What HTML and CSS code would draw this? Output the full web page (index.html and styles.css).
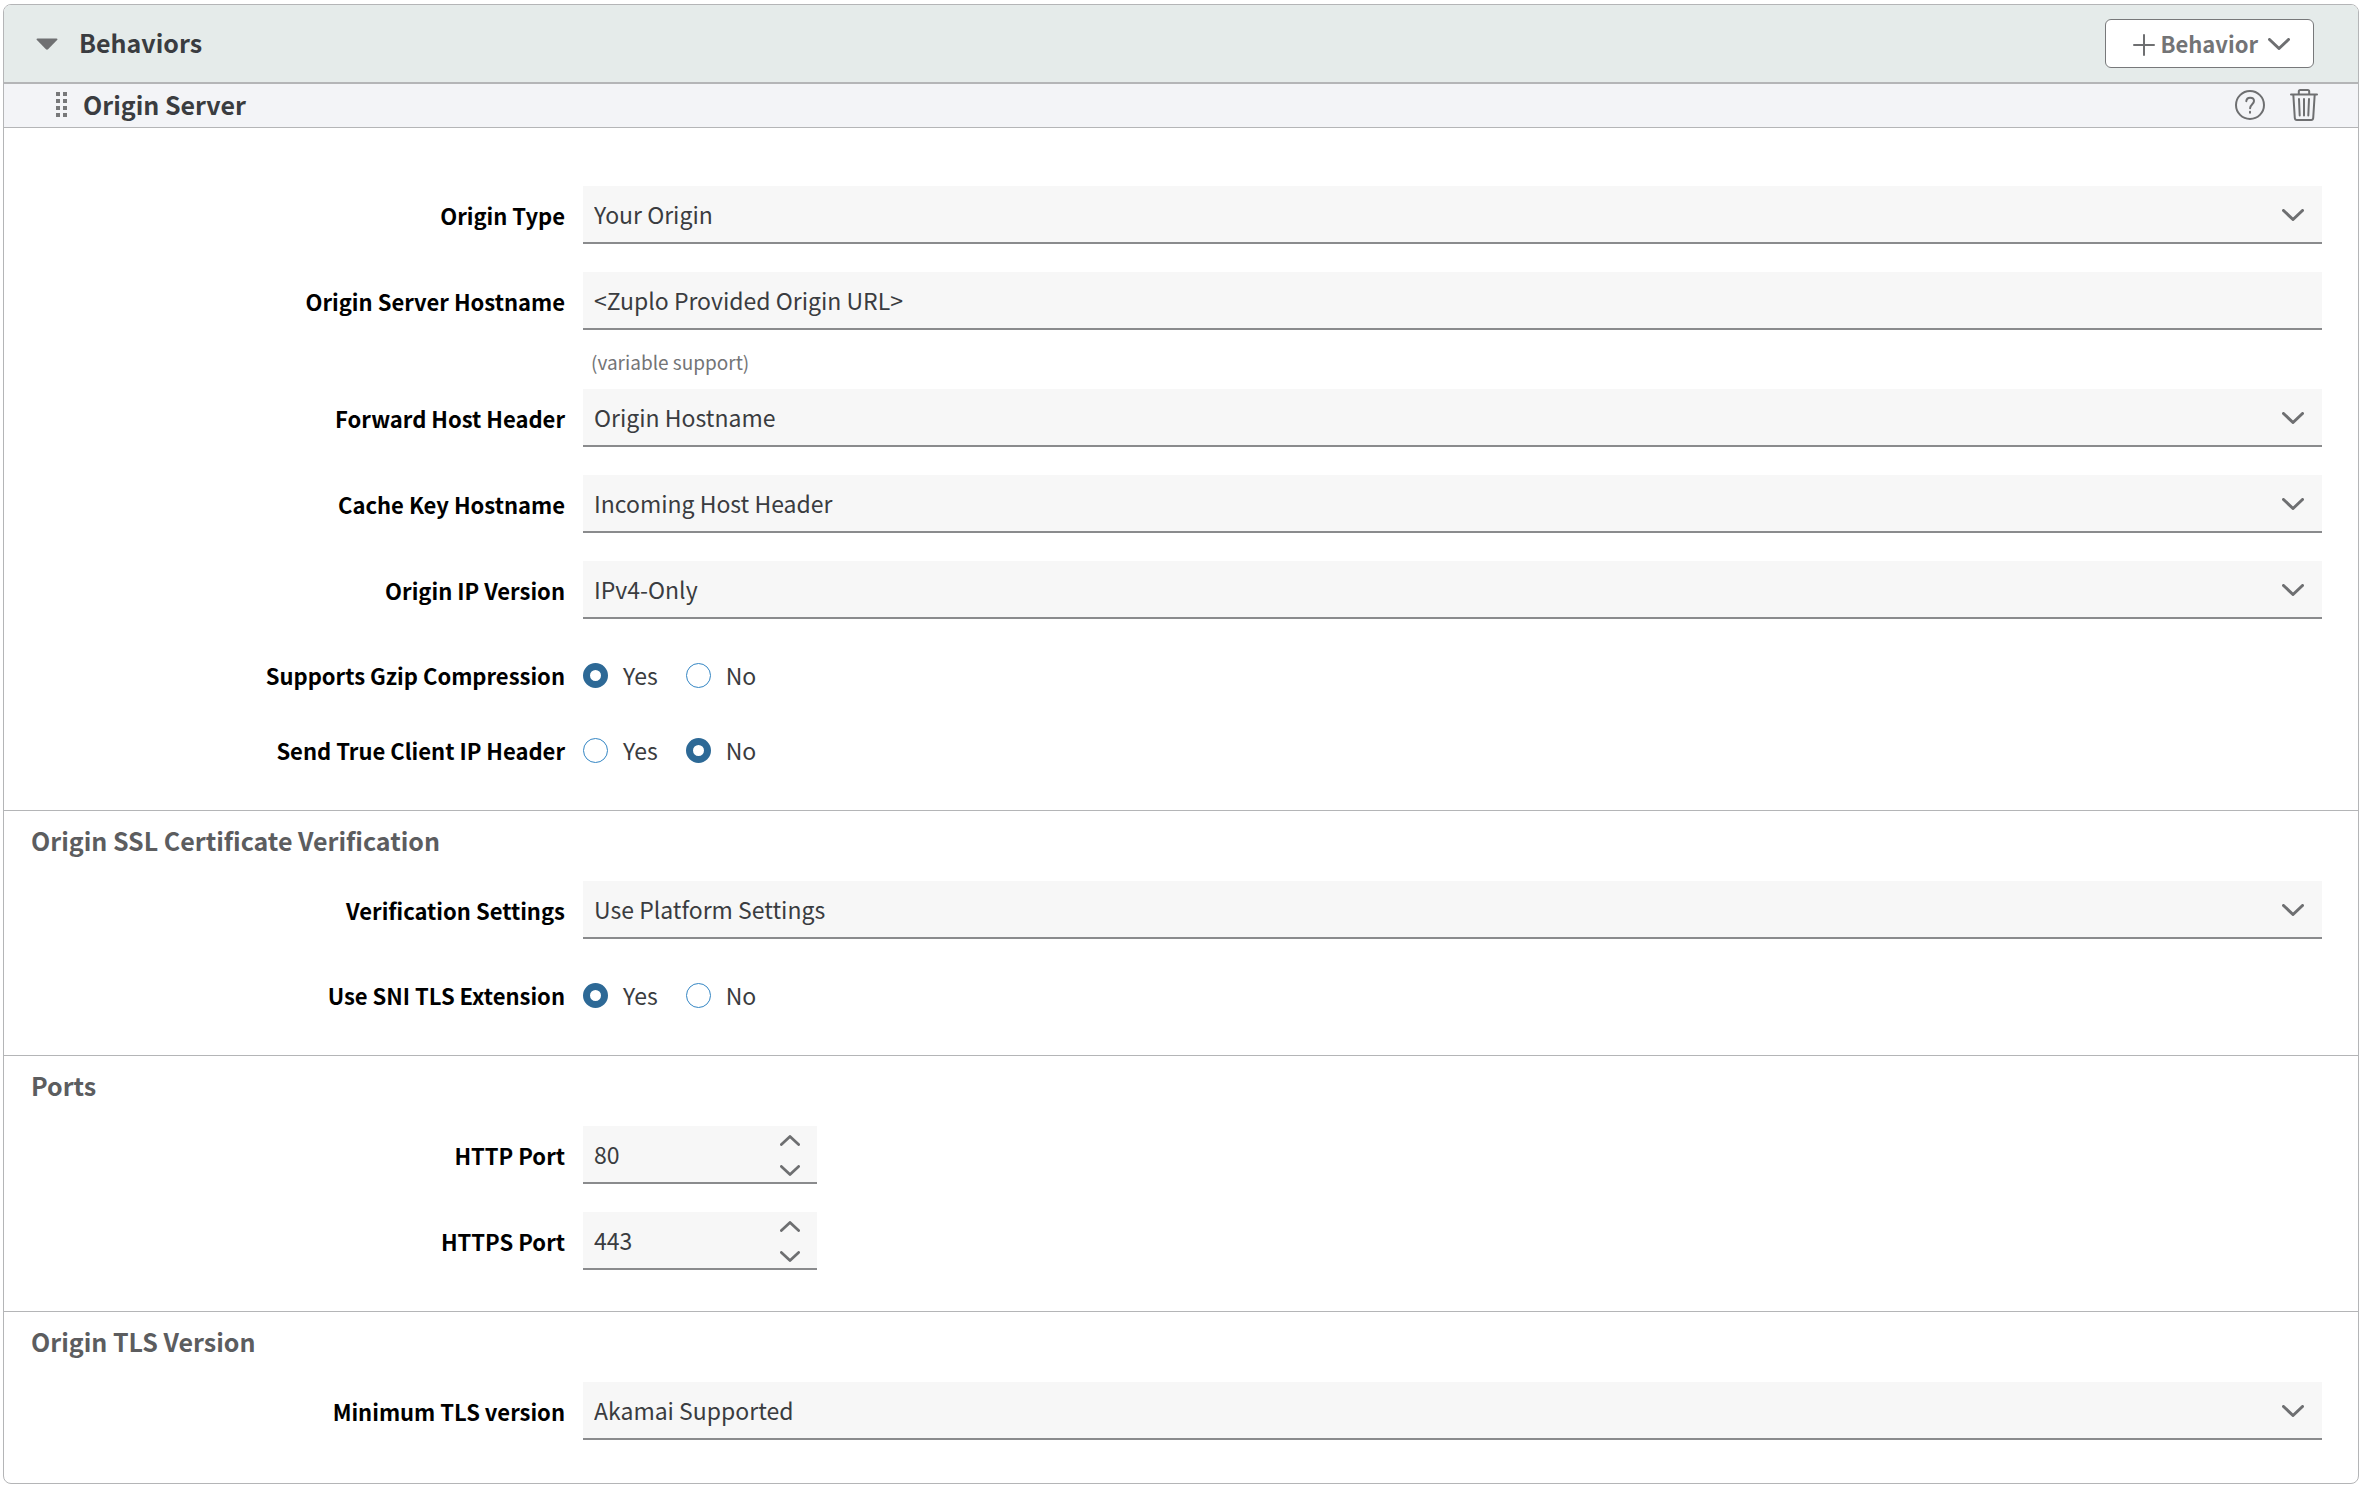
FILE: index.html
```html
<!DOCTYPE html>
<html lang="en">
<head>
<meta charset="utf-8">
<meta name="viewport" content="width=device-width, initial-scale=1">
<title>Behaviors</title>
<link rel="stylesheet" href="styles.css">
</head>
<body>
<svg class="sprite" aria-hidden="true">
  <symbol id="chevron" viewBox="0 0 22 12"><path d="M1.5 1.5 11 10.5 20.5 1.5"/></symbol>
  <symbol id="chevron-up" viewBox="0 0 22 12"><path d="M1.5 10.5 11 1.5 20.5 10.5"/></symbol>
</svg>
<main class="panel">
  <header class="panel-header">
    <button class="icon-button" type="button" aria-label="Collapse behaviors">
      <svg class="caret" viewBox="0 0 22 12"><path d="M1.5 .5h19q1.5 .3 .6 1.6l-8.8 9q-1.3 1.2-2.6 0L.9 2.1Q0 .8 1.5 .5z"/></svg>
    </button>
    <h1 class="title">Behaviors</h1>
    <button class="add-button" type="button">
      <svg class="line-icon plus" viewBox="0 0 22 24"><path d="M11 3v20M1 13h20"/></svg>
      <span>Behavior</span>
      <svg class="line-icon chevron add-chevron"><use href="#chevron"/></svg>
    </button>
  </header>
  <div class="behavior-header">
    <svg class="grip" viewBox="0 0 11 26" aria-hidden="true"><path d="M0 0h4v4H0zM7 0h4v4H7zM0 7h4v4H0zM7 7h4v4H7zM0 14h4v4H0zM7 14h4v4H7zM0 21h4v4H0zM7 21h4v4H7z"/></svg>
    <h2 class="title">Origin Server</h2>
    <div class="actions">
      <button class="icon-button" type="button" aria-label="Help">
        <svg class="line-icon help" viewBox="0 0 30 30"><circle cx="15" cy="15" r="14"/><path d="M11.300 11.200C11.500 8.900 13 7.700 15.100 7.700c2.300 0 3.900 1.300 3.900 3.300 0 3-3.900 3.500-3.900 7.300"/><path d="M15 21.700v1"/></svg>
      </button>
      <button class="icon-button" type="button" aria-label="Delete">
        <svg class="line-icon trash" viewBox="0 0 28 32"><path d="M1 5.500h26M8.800 5.500V2.500q0-1.500 1.500-1.500h7.400q1.500 0 1.500 1.500v3M3.300 5.500 4.800 29q.2 2 2 2h14.400q1.800 0 2-2L24.700 5.500M9 10l.7 16.500M14 10v16.500M19 10l-.7 16.500"/></svg>
      </button>
    </div>
  </div>

  <form>
    <section class="section section-first">
      <div class="row">
        <label class="label" for="origin-type">Origin Type</label>
        <div class="select"><select id="origin-type"><option>Your Origin</option></select><svg class="line-icon chevron"><use href="#chevron"/></svg></div>
      </div>
      <div class="row">
        <label class="label" for="hostname">Origin Server Hostname</label>
        <input class="text" id="hostname" type="text" value="&lt;Zuplo Provided Origin URL&gt;" aria-describedby="hostname-hint">
        <p class="hint" id="hostname-hint">(variable support)</p>
      </div>
      <div class="row">
        <label class="label" for="forward">Forward Host Header</label>
        <div class="select"><select id="forward"><option>Origin Hostname</option></select><svg class="line-icon chevron"><use href="#chevron"/></svg></div>
      </div>
      <div class="row">
        <label class="label" for="cache-key">Cache Key Hostname</label>
        <div class="select"><select id="cache-key"><option>Incoming Host Header</option></select><svg class="line-icon chevron"><use href="#chevron"/></svg></div>
      </div>
      <div class="row">
        <label class="label" for="ip-version">Origin IP Version</label>
        <div class="select"><select id="ip-version"><option>IPv4-Only</option></select><svg class="line-icon chevron"><use href="#chevron"/></svg></div>
      </div>
      <div class="row row-radio" role="radiogroup" aria-labelledby="gzip">
        <span class="label" id="gzip">Supports Gzip Compression</span>
        <div class="radios">
          <label class="radio"><input type="radio" name="gzip" checked>Yes</label>
          <label class="radio"><input type="radio" name="gzip">No</label>
        </div>
      </div>
      <div class="row row-radio" role="radiogroup" aria-labelledby="client-ip">
        <span class="label" id="client-ip">Send True Client IP Header</span>
        <div class="radios">
          <label class="radio"><input type="radio" name="client-ip">Yes</label>
          <label class="radio"><input type="radio" name="client-ip" checked>No</label>
        </div>
      </div>
    </section>

    <section class="section">
      <h3 class="section-title">Origin SSL Certificate Verification</h3>
      <div class="row">
        <label class="label" for="verification">Verification Settings</label>
        <div class="select"><select id="verification"><option>Use Platform Settings</option></select><svg class="line-icon chevron"><use href="#chevron"/></svg></div>
      </div>
      <div class="row row-radio" role="radiogroup" aria-labelledby="sni">
        <span class="label" id="sni">Use SNI TLS Extension</span>
        <div class="radios">
          <label class="radio"><input type="radio" name="sni" checked>Yes</label>
          <label class="radio"><input type="radio" name="sni">No</label>
        </div>
      </div>
    </section>

    <section class="section">
      <h3 class="section-title">Ports</h3>
      <div class="row">
        <label class="label" for="http-port">HTTP Port</label>
        <div class="number">
          <input id="http-port" type="number" value="80">
          <div class="steppers">
            <button class="icon-button" type="button" aria-label="Increase HTTP port"><svg class="line-icon step"><use href="#chevron-up"/></svg></button>
            <button class="icon-button" type="button" aria-label="Decrease HTTP port"><svg class="line-icon step"><use href="#chevron"/></svg></button>
          </div>
        </div>
      </div>
      <div class="row">
        <label class="label" for="https-port">HTTPS Port</label>
        <div class="number">
          <input id="https-port" type="number" value="443">
          <div class="steppers">
            <button class="icon-button" type="button" aria-label="Increase HTTPS port"><svg class="line-icon step"><use href="#chevron-up"/></svg></button>
            <button class="icon-button" type="button" aria-label="Decrease HTTPS port"><svg class="line-icon step"><use href="#chevron"/></svg></button>
          </div>
        </div>
      </div>
    </section>

    <section class="section section-last">
      <h3 class="section-title">Origin TLS Version</h3>
      <div class="row">
        <label class="label" for="min-tls">Minimum TLS version</label>
        <div class="select"><select id="min-tls"><option>Akamai Supported</option></select><svg class="line-icon chevron"><use href="#chevron"/></svg></div>
      </div>
    </section>
  </form>
</main>
</body>
</html>
```
FILE: styles.css
```css
* { box-sizing: border-box; }

body {
  margin: 0;
  padding: 4px 7px 8px 3px;
  background: #fff;
  color: #3a3c40;
  font: 23px/36px "Noto Sans CJK SC", "Noto Sans", sans-serif;
}

h1, h2, h3, p { margin: 0; }
button, input, select { font: inherit; color: inherit; }

.sprite { display: none; }

.panel {
  border: 1px solid #b4b5b7;
  border-radius: 8px;
  overflow: hidden;
}

.title {
  padding-bottom: 3px;
  font-size: 25px;
  font-weight: 700;
  line-height: 40px;
}

.panel-header {
  display: flex;
  align-items: center;
  height: 79px;
  padding: 0 44px 0 32px;
  background: #e5ebea;
  border-bottom: 2px solid #b4b5b7;
}
.panel-header .title { margin-left: 21px; }

.icon-button {
  display: flex;
  padding: 0;
  border: 0;
  background: none;
  color: #6e6f71;
  cursor: pointer;
}

.caret { width: 22px; height: 12px; fill: #6f7072; }

.line-icon {
  fill: none;
  stroke: #6e6f71;
  stroke-width: 2;
  stroke-linecap: round;
  stroke-linejoin: round;
}
.plus { width: 22px; height: 24px; }
.chevron { width: 22px; height: 12px; stroke-width: 3; }
.step { width: 20px; height: 11px; stroke-width: 3; }
.help { width: 30px; height: 30px; }
.trash { width: 28px; height: 32px; }

.add-button {
  display: flex;
  align-items: center;
  gap: 5px;
  height: 49px;
  margin-left: auto;
  padding: 0 23px 0 27px;
  border: 1px solid #77787a;
  border-radius: 6px;
  background: #fff;
  color: #737476;
  font-size: 22px;
  font-weight: 700;
  cursor: pointer;
}
.add-button span { padding-bottom: 1px; }
.add-chevron { margin-left: 5px; }

.behavior-header {
  display: flex;
  align-items: center;
  height: 44px;
  padding: 0 40px 1px 52px;
  background: #f3f4f7;
  border-bottom: 1px solid #b4b5b7;
}
.behavior-header .title { margin-left: 16px; }
.grip { width: 11px; height: 26px; fill: #77787a; }
.actions { display: flex; align-items: center; gap: 25px; margin-left: auto; }

.section {
  display: flex;
  flex-direction: column;
  gap: 28px;
  padding: 0 36px 41px 0;
  border-top: 1px solid #b4b5b7;
}
.section-first { padding-top: 58px; border-top: 0; }
.section-last { padding-bottom: 43px; }

.section-title {
  height: 42px;
  padding: 9px 0 0 27px;
  color: #5c5d5f;
  font-size: 25px;
  font-weight: 700;
  line-height: 40px;
}

.row {
  display: grid;
  grid-template-columns: 561px minmax(0, 1fr);
  column-gap: 18px;
  align-items: center;
}
.label {
  padding-bottom: 1px;
  color: #000;
  font-size: 22px;
  font-weight: 700;
  text-align: right;
}

.text, .select select, .number input {
  width: 100%;
  height: 58px;
  padding: 0 11px;
  border: 0;
  border-bottom: 2px solid #8a8b8d;
  border-radius: 0;
  background: #f7f7f7;
  appearance: none;
}

.select { display: grid; align-items: center; }
.select > * { grid-area: 1 / 1; }
.select .chevron { justify-self: end; margin-right: 18px; pointer-events: none; }

.hint {
  grid-column: 2;
  height: 31px;
  padding: 16px 0 0 8px;
  color: #737476;
  font-size: 19px;
  line-height: 32px;
}

.row-radio { padding-top: 10px; }
.radios { display: flex; gap: 28px; line-height: 37px; }
.row-radio .label { padding-bottom: 0; line-height: 37px; }
.radio { display: flex; align-items: center; gap: 15px; }
.radio input {
  width: 25px;
  height: 25px;
  margin: 0;
  border: 1px solid #3486c4;
  border-radius: 50%;
  background: #fff;
  appearance: none;
}
.radio input:checked { border: 7px solid #2d6996; }

.number { display: grid; width: 234px; }
.number > * { grid-area: 1 / 1; }
.number input { appearance: textfield; }
.number input::-webkit-inner-spin-button { appearance: none; margin: 0; }
.steppers {
  display: flex;
  flex-direction: column;
  align-self: start;
  justify-self: end;
  gap: 19px;
  padding: 9px 17px 0 0;
}

@media (max-width: 1100px) {
  .row { grid-template-columns: 300px minmax(0, 1fr); }
}
```
